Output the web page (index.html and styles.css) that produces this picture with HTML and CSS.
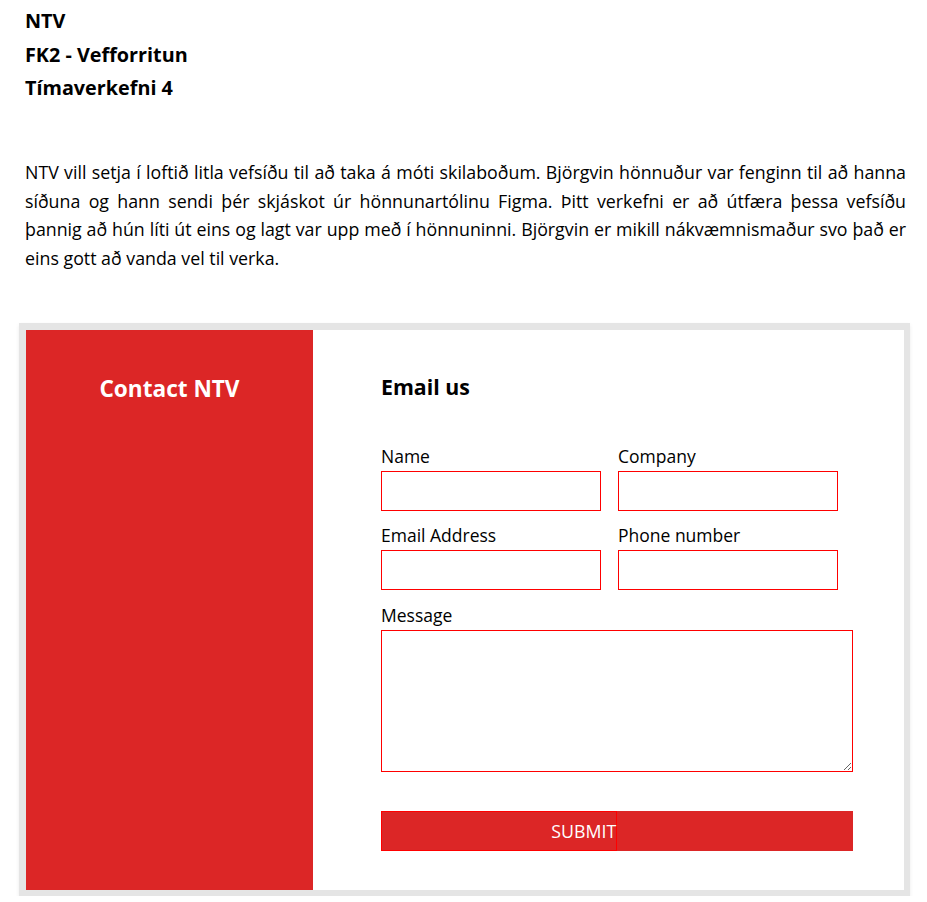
FILE: index.html
```html
<!DOCTYPE html>
<html lang="is">
<head>
<meta charset="utf-8">
<title>NTV - Tímaverkefni 4</title>
<link rel="stylesheet" href="styles.css">
</head>
<body>
<div class="page">
  <header class="titles">
    <div>NTV</div>
    <div>FK2 - Vefforritun</div>
    <div>Tímaverkefni 4</div>
  </header>
  <p class="intro">NTV vill setja í loftið litla vefsíðu til að taka á móti skilaboðum. Björgvin hönnuður var fenginn til að hanna síðuna og hann sendi þér skjáskot úr hönnunartólinu Figma. Þitt verkefni er að útfæra þessa vefsíðu þannig að hún líti út eins og lagt var upp með í hönnuninni. Björgvin er mikill nákvæmnismaður svo það er eins gott að vanda vel til verka.</p>
  <section class="box">
    <aside class="side">
      <h2 class="side-title">Contact NTV</h2>
    </aside>
    <div class="main">
      <h3 class="main-title">Email us</h3>
      <form class="form">
        <div class="grid">
          <label class="field"><span class="label">Name</span><input class="input" type="text"></label>
          <label class="field"><span class="label">Company</span><input class="input" type="text"></label>
          <label class="field"><span class="label">Email Address</span><input class="input" type="email"></label>
          <label class="field"><span class="label">Phone number</span><input class="input" type="tel"></label>
        </div>
        <label class="field message"><span class="label">Message</span><textarea class="textarea"></textarea></label>
        <div class="submit-bar"><button class="submit" type="button">SUBMIT</button></div>
      </form>
    </div>
  </section>
</div>
</body>
</html>
```
FILE: styles.css
```css
html, body {
  margin: 0;
  padding: 0;
  background: #fff;
}
body {
  font-family: "Open Sans", "Noto Sans", sans-serif;
  color: #000;
}
.page {
  padding: 4px 21px 0 25px;
}
.titles {
  font-size: 19.8px;
  font-weight: 700;
  line-height: 33.5px;
}
.intro {
  margin: 53.6px 0 0;
  font-size: 17.8px;
  line-height: 28.6px;
  text-align: justify;
}
.box {
  display: flex;
  margin: 50.5px -4px 0 -6px;
  border-style: solid;
  border-color: #e5e5e5;
  border-width: 7px 6px 6px 7px;
  box-shadow: 0 2px 4px rgba(0, 0, 0, 0.08);
  height: 560px;
}
.side {
  width: 287px;
  flex: none;
  background: #dc2626;
  padding-top: 43.5px;
  text-align: center;
  box-sizing: border-box;
}
.side-title {
  margin: 0;
  color: #fff;
  font-size: 22.6px;
  font-weight: 700;
  line-height: normal;
}
.main {
  flex: 1;
  padding: 42.5px 0 0 68px;
}
.main-title {
  margin: 0;
  font-size: 21.3px;
  font-weight: 700;
  line-height: normal;
}
.form {
  margin-top: 43px;
  width: 472.4px;
}
.grid {
  display: grid;
  grid-template-columns: 220.4px 220.4px;
  column-gap: 16.6px;
  row-gap: 12.2px;
}
.field {
  display: block;
}
.label {
  display: block;
  font-size: 17.5px;
  line-height: 24px;
  margin-bottom: 2.8px;
}
.input {
  display: block;
  box-sizing: border-box;
  width: 100%;
  height: 40px;
  margin: 0;
  border: 1px solid #f00;
  border-radius: 0;
  outline: none;
  padding: 0 8px;
  font: inherit;
}
.message {
  margin-top: 13px;
}
.textarea {
  display: block;
  box-sizing: border-box;
  width: 100%;
  height: 142.4px;
  margin: 0;
  border: 1px solid #f00;
  border-radius: 0;
  outline: none;
  padding: 4px 8px;
  font: inherit;
}
.submit-bar {
  margin-top: 38.3px;
  height: 40.7px;
  background: #dc2626;
}
.submit {
  display: block;
  box-sizing: border-box;
  width: 50%;
  height: 100%;
  margin: 0;
  padding: 0;
  border: 1px solid #f00;
  background: transparent;
  color: #fff;
  font-family: "Open Sans", "Noto Sans", sans-serif;
  font-size: 17.8px;
  text-align: right;
  cursor: pointer;
}
```
